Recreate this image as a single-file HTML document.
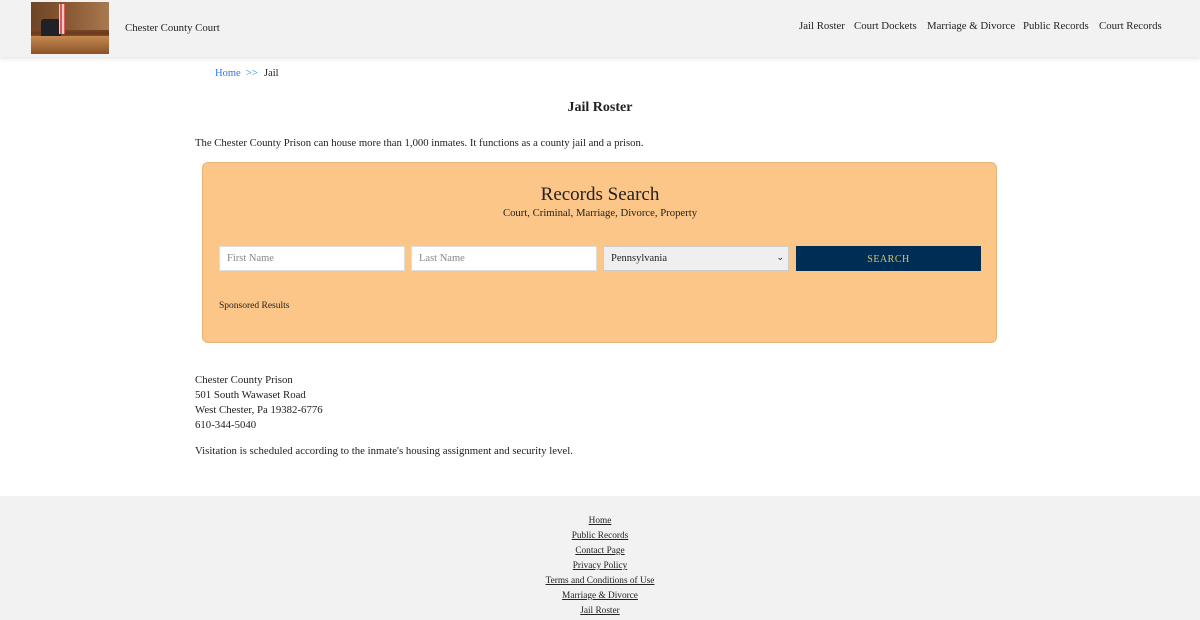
<!DOCTYPE html>
<html><head><meta charset="utf-8"><style>
*{box-sizing:border-box;margin:0;padding:0}
body{width:1200px;height:620px;overflow:hidden;font-family:"Liberation Serif",serif;color:#222;background:#fff;position:relative}
.hdr{position:absolute;left:0;top:0;width:1200px;height:57px;background:#f2f2f2;box-shadow:0 2px 4px rgba(0,0,0,.1)}
.logo{position:absolute;left:31px;top:2px;width:78px;height:52px;background:linear-gradient(180deg,#7a4a28 0%,#9a6338 40%,#6b3a1e 60%,#b77a44 80%,#8a5530 100%);overflow:hidden}
.t{position:absolute;font-size:10.8px;white-space:nowrap}
.box{position:absolute;left:202px;top:162px;width:795px;height:181px;background:#fcc688;border:1px solid #e6b47a;border-radius:6px}
.in{position:absolute;top:246px;height:25px;background:#fff;border:1px solid #ddd;font-size:10.5px;color:#888;padding:6px 7px}
.ft{position:absolute;left:0;top:496px;width:1200px;height:124px;background:#f2f2f2}
.fl{position:absolute;left:0;width:1200px;text-align:center;font-size:9.3px;text-decoration:underline}
</style></head><body>
<div class="hdr">
<div class="logo">
<div style="position:absolute;left:0;top:0;width:78px;height:28px;background:linear-gradient(90deg,#6d4526,#8a5a34 50%,#a87a50)"></div>
<div style="position:absolute;left:10px;top:17px;width:20px;height:20px;background:#1e2226;border-radius:3px"></div>
<div style="position:absolute;left:28px;top:2px;width:6px;height:30px;background:linear-gradient(90deg,#fff,#c22,#fff,#c22)"></div>
<div style="position:absolute;left:0;top:34px;width:78px;height:18px;background:linear-gradient(180deg,#c58a50,#8a5228)"></div>
</div>
<div class="t" style="left:125px;top:22px">Chester County Court</div>
<div class="t" style="left:799px;top:20px">Jail Roster</div>
<div class="t" style="left:854px;top:20px">Court Dockets</div>
<div class="t" style="left:927px;top:20px">Marriage &amp; Divorce</div>
<div class="t" style="left:1023px;top:20px">Public Records</div>
<div class="t" style="left:1099px;top:20px">Court Records</div>
</div>
<div class="t" style="left:215px;top:68px;font-size:10.5px;color:#2a7ae2">Home &nbsp;&gt;&gt;</div>
<div class="t" style="left:264px;top:68px;font-size:10.5px">Jail</div>
<div class="t" style="left:0;width:1200px;text-align:center;top:100px;font-size:14px;font-weight:bold">Jail Roster</div>
<div class="t" style="left:195px;top:137px;font-size:10.7px">The Chester County Prison can house more than 1,000 inmates. It functions as a county jail and a prison.</div>
<div class="box"></div>
<div class="t" style="left:0;width:1200px;text-align:center;top:184px;font-size:19px">Records Search</div>
<div class="t" style="left:0;width:1200px;text-align:center;top:207px;font-size:10.7px">Court, Criminal, Marriage, Divorce, Property</div>
<div class="in" style="left:219px;width:186px">First Name</div>
<div class="in" style="left:411px;width:186px">Last Name</div>
<div class="in" style="left:603px;width:186px;background:#efefef;color:#222;border-color:#ccc">Pennsylvania<span style="position:absolute;right:4px;top:5px;font-size:9px">&#8964;</span></div>
<div style="position:absolute;left:796px;top:246px;width:185px;height:25px;background:#002d54;color:#d9c46a;font-size:10px;letter-spacing:.5px;text-align:center;line-height:27px">SEARCH</div>
<div class="t" style="left:219px;top:301px;font-size:9.5px">Sponsored Results</div>
<div class="t" style="left:195px;top:373px;line-height:15px">Chester County Prison<br>501 South Wawaset Road<br>West Chester, Pa 19382-6776<br>610-344-5040</div>
<div class="t" style="left:195px;top:445px">Visitation is scheduled according to the inmate's housing assignment and security level.</div>
<div class="ft"></div>
<div class="fl" style="top:516px">Home</div>
<div class="fl" style="top:531px">Public Records</div>
<div class="fl" style="top:546px">Contact Page</div>
<div class="fl" style="top:561px">Privacy Policy</div>
<div class="fl" style="top:576px">Terms and Conditions of Use</div>
<div class="fl" style="top:591px">Marriage &amp; Divorce</div>
<div class="fl" style="top:606px">Jail Roster</div>
</body></html>
